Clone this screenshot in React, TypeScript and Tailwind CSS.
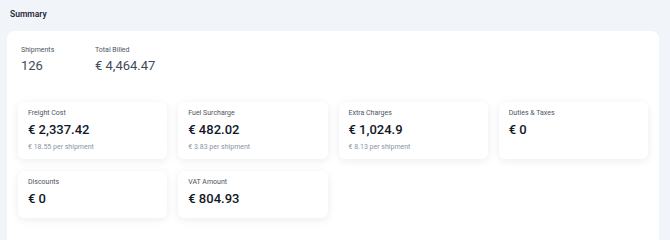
const stats = [
  { label: "Shipments", value: "126", width: "w-[74px]" },
  { label: "Total Billed", value: "€ 4,464.47", width: "" },
];

const cards = [
  { label: "Freight Cost", value: "€ 2,337.42", sub: "€ 18.55 per shipment" },
  { label: "Fuel Surcharge", value: "€ 482.02", sub: "€ 3.83 per shipment" },
  { label: "Extra Charges", value: "€ 1,024.9", sub: "€ 8.13 per shipment" },
  { label: "Duties & Taxes", value: "€ 0" },
  { label: "Discounts", value: "€ 0" },
  { label: "VAT Amount", value: "€ 804.93" },
];

const App = () => {
  return (
    <div className="h-[240px] w-[670px] overflow-hidden bg-[#f1f4f8] pt-[8px] font-['Roboto',sans-serif]">
      <h1 className="pl-[10px] text-[8.5px] leading-[12px] font-semibold text-[#1f2937]">Summary</h1>

      <div className="ml-[7px] mt-[11px] w-[652px] h-[240px] rounded-[8px] bg-white px-[11px] pt-[15px]">
        <div className="flex pl-[3px]">
          {stats.map((s) => (
            <div key={s.label} className={s.width}>
              <div className="text-[7px] leading-[9px] text-[#4b5563]">{s.label}</div>
              <div className="mt-[3px] text-[13px] leading-[16px] text-[#3f4a5a]">{s.value}</div>
            </div>
          ))}
        </div>

        <div className="mt-[28px] grid grid-cols-4 gap-x-[11px] gap-y-[12px]">
          {cards.map((c) => (
            <div
              key={c.label}
              className={
                "rounded-[6px] bg-white px-[10px] pt-[7px] shadow-[0_2px_8px_rgba(15,23,42,0.08)] " +
                (c.sub ? "pb-[7px]" : "pb-[11px]")
              }
            >
              <div className="text-[7px] leading-[9px] text-[#4b5563]">{c.label}</div>
              <div className="mt-[4px] text-[13px] leading-[16px] font-medium text-[#111827]">{c.value}</div>
              {c.sub && (
                <div className="mt-[5px] text-[7px] leading-[9px] text-[#8a94a3]">{c.sub}</div>
              )}
            </div>
          ))}
        </div>
      </div>
    </div>
  );
};

export default App;
